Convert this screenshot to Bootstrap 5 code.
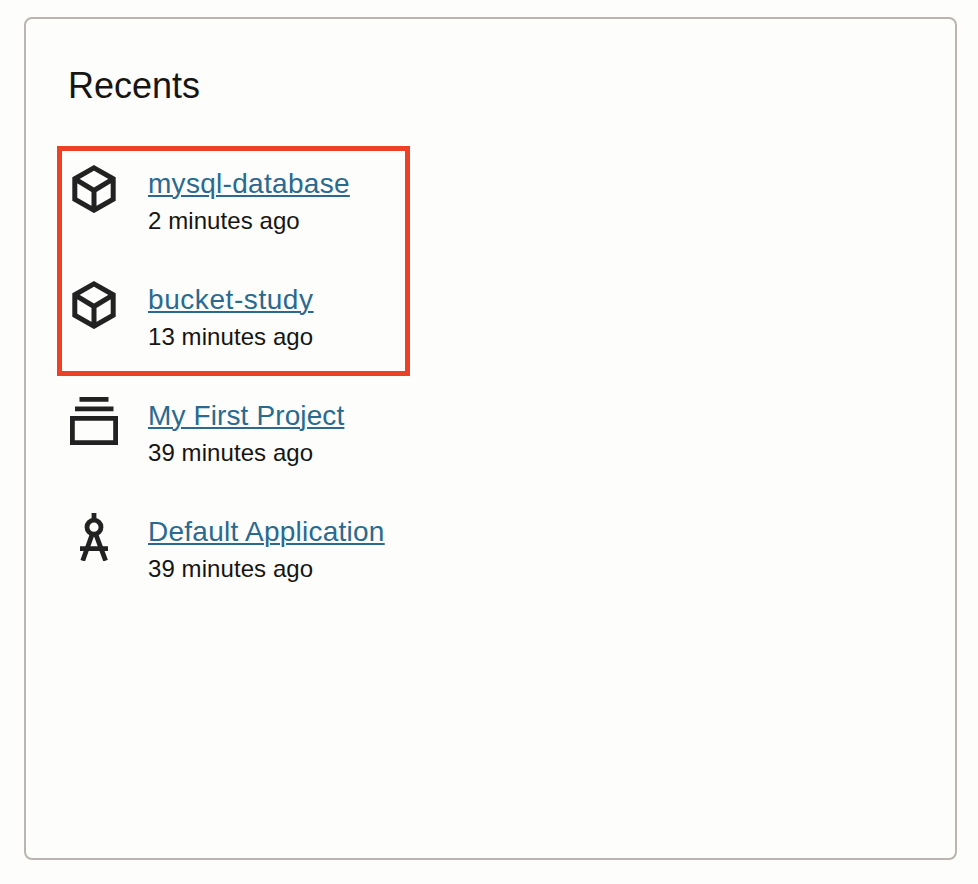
<!DOCTYPE html>
<html lang="en">
<head>
<meta charset="utf-8">
<meta name="viewport" content="width=device-width, initial-scale=1">
<title>Recents</title>
<link href="https://cdn.jsdelivr.net/npm/bootstrap@5.3.0/dist/css/bootstrap.min.css" rel="stylesheet">
<style>
  body { background: #fdfdfb; color: #161513; font-family: "Liberation Sans", Arial, sans-serif; }
  .page { height: 884px; padding: 17px 21px 24px 24px; }
  .recents { background: #fdfdfb; border: 2px solid #bab5b0; border-radius: 8px; padding: 45px 42px; color: #161513; }
  .recents-title { font-size: 36px; line-height: 44px; height: 44px; margin-bottom: 57px; font-weight: 400; }
  .recents-list { gap: 40px; }
  .entry { gap: 30px; height: 76px; }
  .entry svg { width: 48px; height: 48px; flex: none; margin-left: 2px; }
  .entry a { font-size: 28px; line-height: 38px; color: #2a6a90; text-decoration-thickness: 2px; text-underline-offset: 2px; letter-spacing: .3px; }
  .entry time { font-size: 24px; line-height: 36px; letter-spacing: .08px; }
  .entry .track-wide { letter-spacing: .57px; }
  .entry .track-tight { letter-spacing: .12px; }
  .entry .track-mid { letter-spacing: .25px; }
  .highlight { left: -11px; top: -19px; width: 353px; height: 230px; border: 5px solid #ec4126; pointer-events: none; }
</style>
<script src="https://cdn.jsdelivr.net/npm/bootstrap@5.3.0/dist/js/bootstrap.bundle.min.js"></script>
</head>
<body>
<svg class="d-none" aria-hidden="true">
  <symbol id="cube" viewBox="0 0 48 48">
    <path d="M24 2.900 43.200 13.800V34.200L24 45.200 4.800 34.200V13.800ZM4.800 13.800 24 25.500 43.200 13.800M24 25.500V45" fill="none" stroke="#222" stroke-width="5"/>
  </symbol>
  <symbol id="stack" viewBox="0 0 48 48">
    <path d="M9.500 0h29v4.800h-29zM5 9.500h38.500v4.800H5z" fill="#222"/>
    <path d="M2.400 21.400h43.200v24.200H2.400z" fill="none" stroke="#222" stroke-width="4.800"/>
  </symbol>
  <symbol id="compass" viewBox="0 0 48 48">
    <g fill="none" stroke="#222" stroke-width="4.800">
      <circle cx="24" cy="14.200" r="7"/>
      <path d="M24 0v7M10 35.700h28"/>
      <path d="M22.300 21 12.700 47.700M25.700 21l9.900 26.700"/>
    </g>
  </symbol>
</svg>
<main class="page">
  <section class="card recents h-100">
    <h1 class="recents-title">Recents</h1>
    <div class="recents-list d-flex flex-column position-relative">
      <div class="entry d-flex">
        <svg><use href="#cube"/></svg>
        <div class="d-flex flex-column align-items-start"><a href="#">mysql-database</a><time>2 minutes ago</time></div>
      </div>
      <div class="entry d-flex">
        <svg><use href="#cube"/></svg>
        <div class="d-flex flex-column align-items-start"><a class="track-wide" href="#">bucket-study</a><time>13 minutes ago</time></div>
      </div>
      <div class="entry d-flex">
        <svg><use href="#stack"/></svg>
        <div class="d-flex flex-column align-items-start"><a class="track-tight" href="#">My First Project</a><time>39 minutes ago</time></div>
      </div>
      <div class="entry d-flex">
        <svg><use href="#compass"/></svg>
        <div class="d-flex flex-column align-items-start"><a class="track-mid" href="#">Default Application</a><time>39 minutes ago</time></div>
      </div>
      <div class="highlight position-absolute"></div>
    </div>
  </section>
</main>
</body>
</html>
